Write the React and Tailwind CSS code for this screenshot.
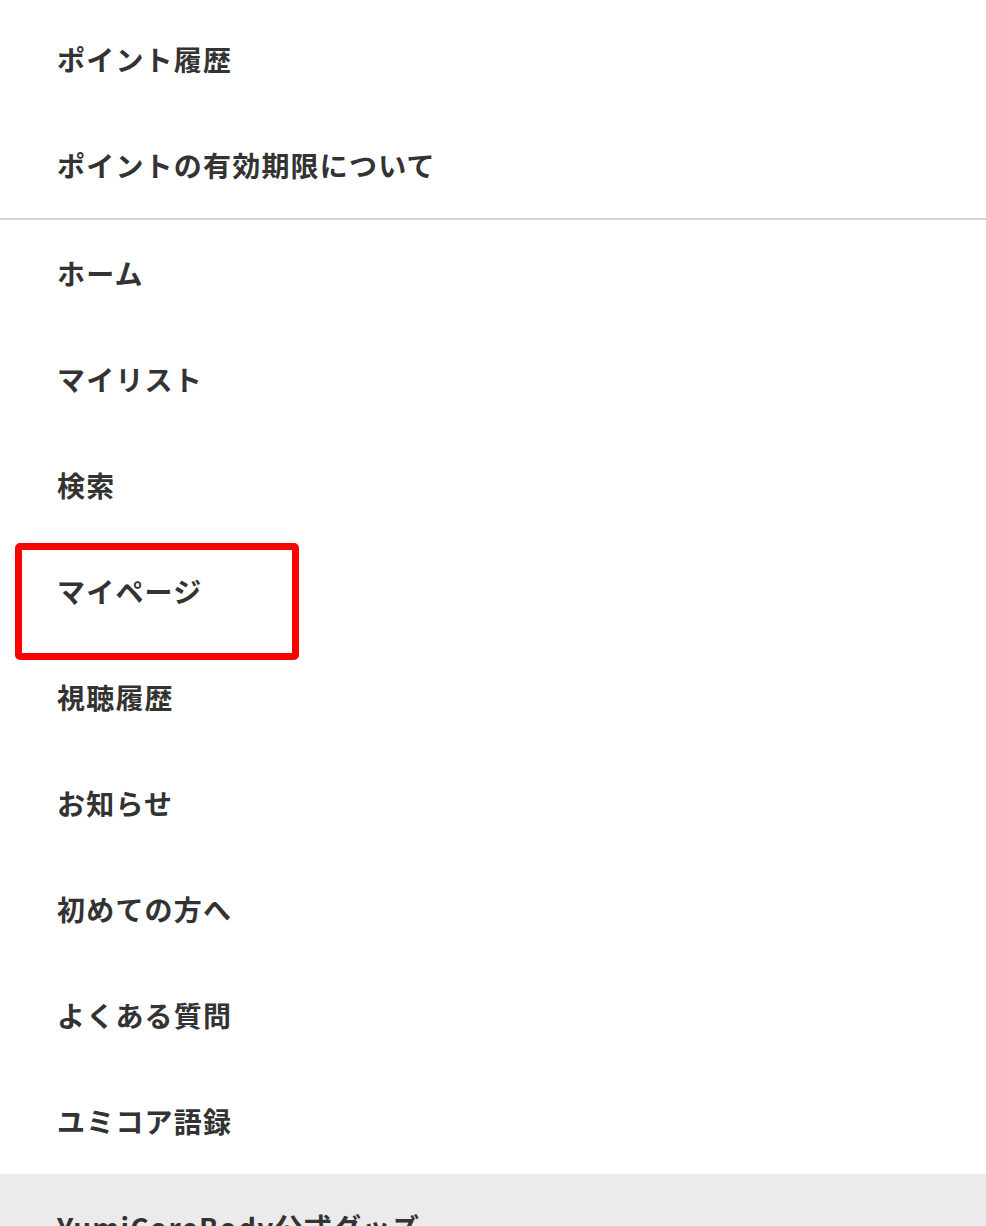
import React from "react";

const topItems = ["ポイント履歴", "ポイントの有効期限について"];

const mainItems = [
  "ホーム",
  "マイリスト",
  "検索",
  "マイページ",
  "視聴履歴",
  "お知らせ",
  "初めての方へ",
  "よくある質問",
  "ユミコア語録",
];

const MenuRow = ({ label, active }) => (
  <div
    className={`flex h-[106px] items-center pl-[57px] ${
      active ? "bg-[#ebebeb]" : "bg-white"
    }`}
  >
    <span className="text-[28px] font-bold leading-none tracking-[1.2px] text-[#333333]">
      {label}
    </span>
  </div>
);

const App = () => {
  return (
    <div
      className="relative h-[1226px] w-[986px] overflow-hidden bg-white"
      style={{ fontFamily: '"Noto Sans CJK JP", "Noto Sans", sans-serif' }}
    >
      <div className="mt-[6px]">
        {topItems.map((item) => (
          <MenuRow key={item} label={item} />
        ))}
        <div className="h-[2px] bg-[#d4d4d4]" />
        {mainItems.map((item) => (
          <MenuRow key={item} label={item} />
        ))}
        <MenuRow label="YumiCoreBody公式グッズ" active />
      </div>

      {/* highlight annotation */}
      <div className="pointer-events-none absolute left-[15px] top-[543px] h-[117px] w-[284px] rounded-[5px] border-[7px] border-[#ff0000]" />
    </div>
  );
};

export default App;
